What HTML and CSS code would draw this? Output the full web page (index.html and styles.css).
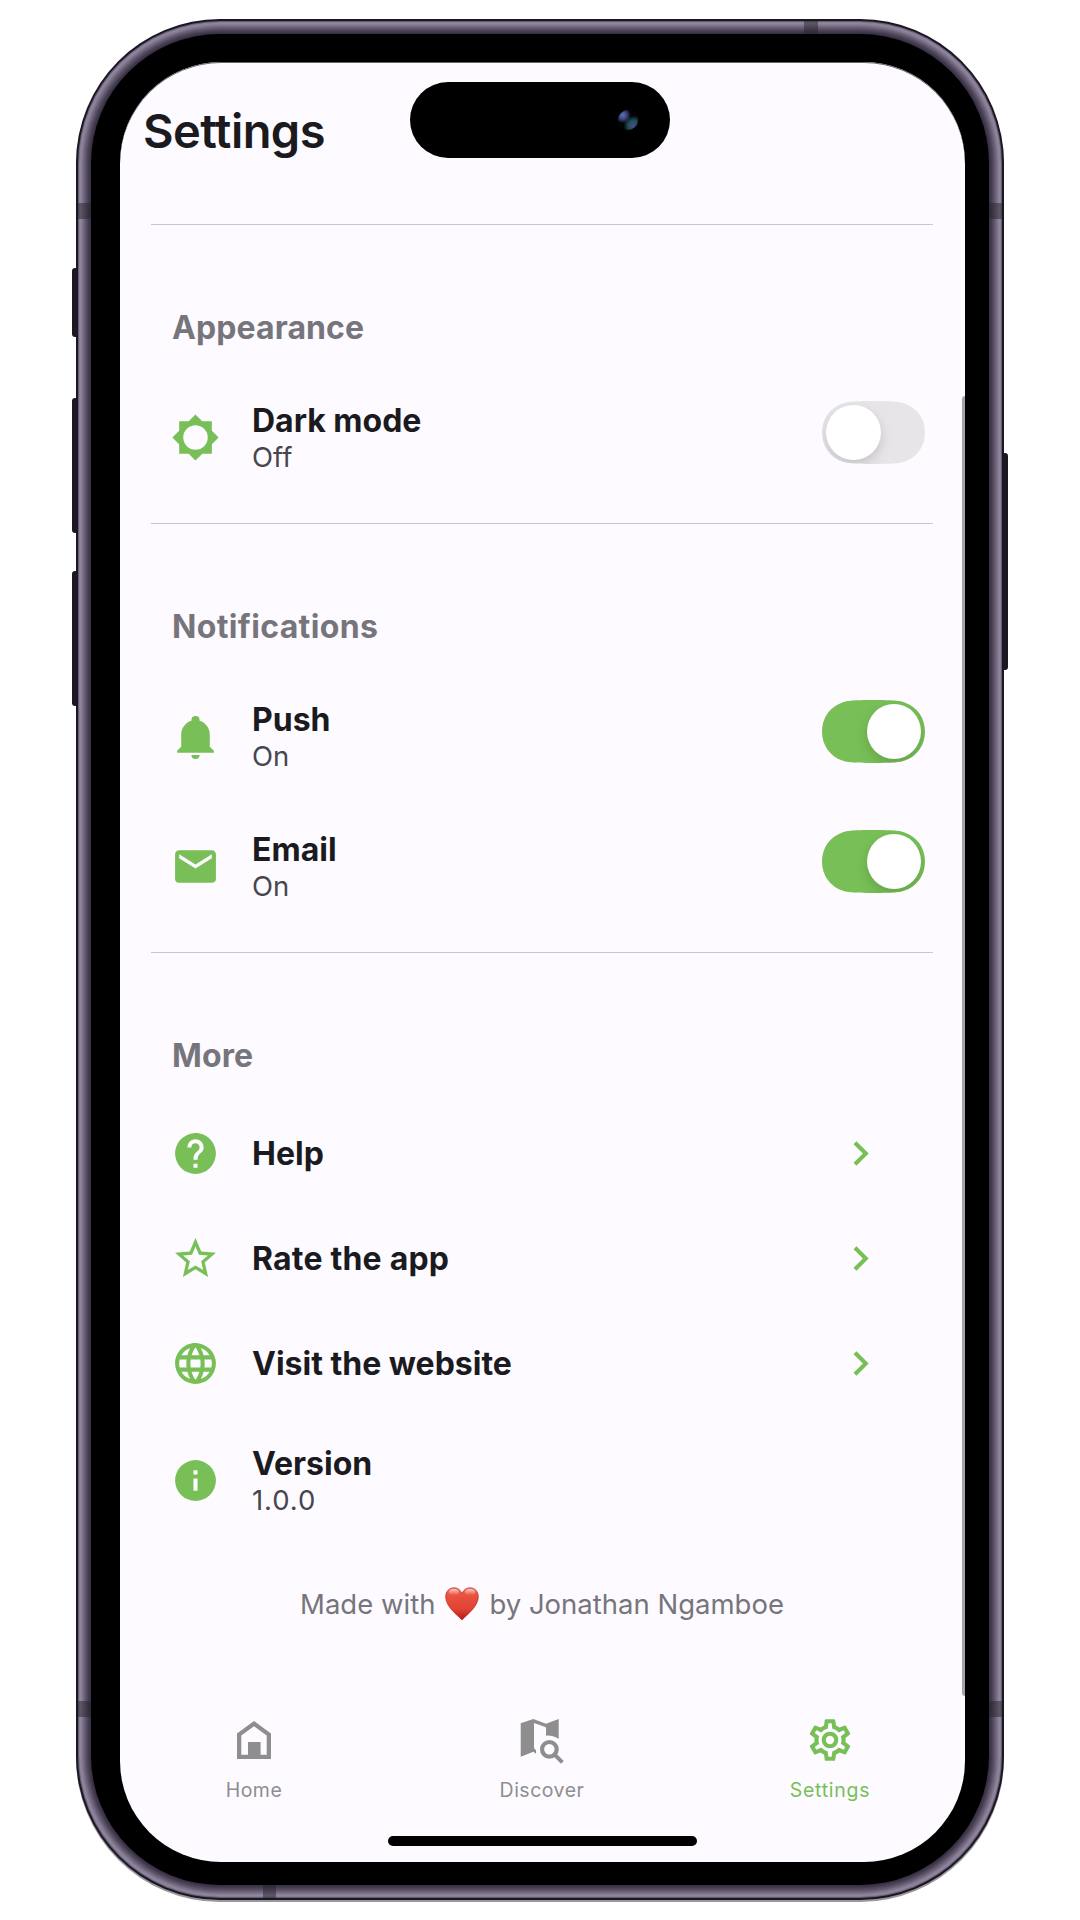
FILE: index.html
```html
<!DOCTYPE html>
<html lang="en">
<head>
<meta charset="utf-8">
<title>Settings</title>
<link rel="stylesheet" href="styles.css">
</head>
<body>
<div class="phone">
  <span class="side-button mute"></span>
  <span class="side-button volume-up"></span>
  <span class="side-button volume-down"></span>
  <span class="side-button power"></span>
  <span class="antenna left-top"></span>
  <span class="antenna left-bottom"></span>
  <span class="antenna right-top"></span>
  <span class="antenna right-bottom"></span>
  <span class="antenna top"></span>
  <span class="antenna bottom"></span>
  <div class="screen">
    <div class="island"><span class="camera"></span></div>
    <header class="header"><h1 class="page-title">Settings</h1></header>
    <main class="content">
      <section class="section">
        <h2 class="section-title">Appearance</h2>
        <div class="row">
          <svg class="icon" viewBox="0 0 24 24"><path d="M12,18A6,6 0 0,1 6,12A6,6 0 0,1 12,6A6,6 0 0,1 18,12A6,6 0 0,1 12,18M20,15.31L23.31,12L20,8.69V4H15.31L12,0.69L8.69,4H4V8.69L0.69,12L4,15.31V20H8.69L12,23.31L15.31,20H20V15.31Z"/></svg>
          <div class="label"><div class="name">Dark mode</div><div class="value">Off</div></div>
          <div class="switch"><span class="knob"></span></div>
        </div>
      </section>
      <section class="section">
        <h2 class="section-title wide">Notifications</h2>
        <div class="row">
          <svg class="icon" viewBox="0 0 24 24"><path d="M21,19V20H3V19L5,17V11C5,7.9 7.03,5.17 10,4.29C10,4.19 10,4.1 10,4A2,2 0 0,1 12,2A2,2 0 0,1 14,4C14,4.1 14,4.19 14,4.29C16.97,5.17 19,7.9 19,11V17L21,19M14,21A2,2 0 0,1 12,23A2,2 0 0,1 10,21"/></svg>
          <div class="label"><div class="name">Push</div><div class="value">On</div></div>
          <div class="switch on"><span class="knob"></span></div>
        </div>
        <div class="row">
          <svg class="icon" viewBox="0 0 24 24"><path d="M20,8L12,13L4,8V6L12,11L20,6M20,4H4C2.89,4 2,4.89 2,6V18A2,2 0 0,0 4,20H20A2,2 0 0,0 22,18V6C22,4.89 21.1,4 20,4Z"/></svg>
          <div class="label"><div class="name">Email</div><div class="value">On</div></div>
          <div class="switch on"><span class="knob"></span></div>
        </div>
      </section>
      <section class="section">
        <h2 class="section-title">More</h2>
        <div class="row link">
          <svg class="icon" viewBox="0 0 24 24"><path d="M15.07,11.25L14.17,12.17C13.45,12.89 13,13.5 13,15H11V14.5C11,13.39 11.45,12.39 12.17,11.67L13.41,10.41C13.78,10.05 14,9.55 14,9C14,7.89 13.1,7 12,7A2,2 0 0,0 10,9H8A4,4 0 0,1 12,5A4,4 0 0,1 16,9C16,9.88 15.64,10.67 15.07,11.25M13,19H11V17H13M12,2A10,10 0 0,0 2,12A10,10 0 0,0 12,22A10,10 0 0,0 22,12C22,6.47 17.5,2 12,2Z"/></svg>
          <div class="label"><div class="name">Help</div></div>
          <svg class="icon chevron" viewBox="0 0 24 24"><path d="M8.59,16.58L13.17,12L8.59,7.41L10,6L16,12L10,18L8.59,16.58Z"/></svg>
        </div>
        <div class="row link">
          <svg class="icon" viewBox="0 0 24 24"><path d="M12,15.39L8.24,17.66L9.23,13.38L5.91,10.5L10.29,10.13L12,6.09L13.71,10.13L18.09,10.5L14.77,13.38L15.76,17.66M22,9.24L14.81,8.63L12,2L9.19,8.63L2,9.24L7.45,13.97L5.82,21L12,17.27L18.18,21L16.54,13.97L22,9.24Z"/></svg>
          <div class="label"><div class="name loose">Rate the app</div></div>
          <svg class="icon chevron" viewBox="0 0 24 24"><path d="M8.59,16.58L13.17,12L8.59,7.41L10,6L16,12L10,18L8.59,16.58Z"/></svg>
        </div>
        <div class="row link">
          <svg class="icon" viewBox="0 0 24 24"><path d="M16.36,14C16.44,13.34 16.5,12.68 16.5,12C16.5,11.32 16.44,10.66 16.36,10H19.74C19.9,10.64 20,11.31 20,12C20,12.69 19.9,13.36 19.74,14M14.59,19.56C15.19,18.45 15.65,17.25 15.97,16H18.92C17.96,17.65 16.43,18.93 14.59,19.56M14.34,14H9.66C9.56,13.34 9.5,12.68 9.5,12C9.5,11.32 9.56,10.65 9.66,10H14.34C14.43,10.65 14.5,11.32 14.5,12C14.5,12.68 14.43,13.34 14.34,14M12,19.96C11.17,18.76 10.5,17.43 10.09,16H13.91C13.5,17.43 12.83,18.76 12,19.96M8,8H5.08C6.03,6.34 7.57,5.06 9.4,4.44C8.8,5.55 8.35,6.75 8,8M5.08,16H8C8.35,17.25 8.8,18.45 9.4,19.56C7.57,18.93 6.03,17.65 5.08,16M4.26,14C4.1,13.36 4,12.69 4,12C4,11.31 4.1,10.64 4.26,10H7.64C7.56,10.66 7.5,11.32 7.5,12C7.5,12.68 7.56,13.34 7.64,14M12,4.03C12.83,5.23 13.5,6.57 13.91,8H10.09C10.5,6.57 11.17,5.23 12,4.03M18.92,8H15.97C15.65,6.75 15.19,5.55 14.59,4.44C16.43,5.07 17.96,6.34 18.92,8M12,2C6.47,2 2,6.5 2,12A10,10 0 0,0 12,22A10,10 0 0,0 22,12A10,10 0 0,0 12,2Z"/></svg>
          <div class="label"><div class="name">Visit the website</div></div>
          <svg class="icon chevron" viewBox="0 0 24 24"><path d="M8.59,16.58L13.17,12L8.59,7.41L10,6L16,12L10,18L8.59,16.58Z"/></svg>
        </div>
        <div class="row">
          <svg class="icon" viewBox="0 0 24 24"><path d="M13,9H11V7H13M13,17H11V11H13M12,2A10,10 0 0,0 2,12A10,10 0 0,0 12,22A10,10 0 0,0 22,12A10,10 0 0,0 12,2Z"/></svg>
          <div class="label"><div class="name">Version</div><div class="value version">1.0.0</div></div>
        </div>
      </section>
      <p class="credit">
        <span>Made with</span>
        <svg class="heart" viewBox="0 0 34 34">
          <defs>
            <linearGradient id="heart-fill" x1="0" y1="0" x2="0" y2="1">
              <stop offset="0" stop-color="#ee6152"/><stop offset=".3" stop-color="#e84f3d"/><stop offset=".65" stop-color="#e04434"/><stop offset="1" stop-color="#b01a16"/>
            </linearGradient>
            <linearGradient id="heart-shine" x1="0" y1="0" x2="0" y2="1">
              <stop offset="0" stop-color="#fff" stop-opacity=".65"/><stop offset="1" stop-color="#fff" stop-opacity="0"/>
            </linearGradient>
          </defs>
          <path d="M17 33C13 28.500 .7 20 .7 9.700C.7 4.500 4.300 .8 8.900 .8C12.600 .8 15.500 3 17 6.500C18.500 3 21.400 .8 25.100 .8C29.700 .8 33.300 4.500 33.300 9.700C33.300 20 21 28.500 17 33Z" fill="url(#heart-fill)" stroke="#c5392c" stroke-width=".8"/>
          <ellipse cx="8.900" cy="5" rx="5.300" ry="3.200" fill="url(#heart-shine)"/>
          <ellipse cx="25.100" cy="5" rx="5.300" ry="3.200" fill="url(#heart-shine)"/>
        </svg>
        <span>by Jonathan Ngamboe</span>
      </p>
    </main>
    <nav class="tabs">
      <a class="tab">
        <svg class="tab-icon" viewBox="0 0 50 50"><path fill-rule="evenodd" d="M8 18.500L25 6L42 18.500V44H8ZM12.300 20.500V39.800H19V27H31.600V39.800H37.700V20.500L25 11.300Z"/></svg>
        <span class="tab-label">Home</span>
      </a>
      <a class="tab">
        <svg class="tab-icon" viewBox="0 0 50 50"><g transform="translate(3.700 4) scale(.3333)"><path d="M0 13L38 0L76 14L114 0V60C104 54 92 49 76 50V25L40 12V88L46 94V104L38 98L0 113Z"/><circle cx="86" cy="91" r="22" fill="none" stroke="currentColor" stroke-width="12.500"/><path d="M101 106L125 130" fill="none" stroke="currentColor" stroke-width="12"/></g></svg>
        <span class="tab-label">Discover</span>
      </a>
      <a class="tab active">
        <svg class="tab-icon" viewBox="0 0 24 24"><path d="M12,8A4,4 0 0,1 16,12A4,4 0 0,1 12,16A4,4 0 0,1 8,12A4,4 0 0,1 12,8M12,10A2,2 0 0,0 10,12A2,2 0 0,0 12,14A2,2 0 0,0 14,12A2,2 0 0,0 12,10M10,22C9.75,22 9.54,21.82 9.5,21.58L9.13,18.93C8.5,18.68 7.96,18.34 7.44,17.94L4.95,18.95C4.73,19.03 4.46,18.95 4.34,18.73L2.34,15.27C2.21,15.05 2.27,14.78 2.46,14.63L4.57,12.97L4.5,12L4.57,11L2.46,9.37C2.27,9.22 2.21,8.95 2.34,8.73L4.34,5.27C4.46,5.05 4.73,4.96 4.95,5.05L7.44,6.05C7.96,5.66 8.5,5.32 9.13,5.07L9.5,2.42C9.54,2.18 9.75,2 10,2H14C14.25,2 14.46,2.18 14.5,2.42L14.87,5.07C15.5,5.32 16.04,5.66 16.56,6.05L19.05,5.05C19.27,4.96 19.54,5.05 19.66,5.27L21.66,8.73C21.79,8.95 21.73,9.22 21.54,9.37L19.43,11L19.5,12L19.43,13L21.54,14.63C21.73,14.78 21.79,15.05 21.66,15.27L19.66,18.73C19.54,18.95 19.27,19.04 19.05,18.95L16.56,17.95C16.04,18.34 15.5,18.68 14.87,18.93L14.5,21.58C14.46,21.82 14.25,22 14,22H10M11.25,4L10.88,6.61C9.68,6.86 8.62,7.5 7.85,8.39L5.44,7.35L4.69,8.65L6.8,10.2C6.4,11.37 6.4,12.64 6.8,13.8L4.68,15.36L5.43,16.66L7.86,15.62C8.63,16.5 9.68,17.14 10.87,17.38L11.24,20H12.76L13.13,17.39C14.32,17.14 15.37,16.5 16.14,15.62L18.57,16.66L19.32,15.36L17.2,13.81C17.6,12.64 17.6,11.37 17.2,10.2L19.31,8.65L18.56,7.35L16.15,8.39C15.38,7.5 14.32,6.86 13.12,6.62L12.75,4H11.25Z"/></svg>
        <span class="tab-label">Settings</span>
      </a>
    </nav>
    <div class="home-indicator"></div>
    <span class="scrollbar"></span>
  </div>
</div>
</body>
</html>
```
FILE: styles.css
```css
* { box-sizing: border-box; }

body {
  margin: 0;
  height: 1920px;
  overflow: hidden;
  background: #fff;
  font-family: Inter, "Liberation Sans", sans-serif;
}

h1, h2, p { margin: 0; }

/* Device: black bezel, with the metal rim built from rings around it */
.phone {
  position: relative;
  width: 898px;
  height: 1851px;
  margin: 34px 0 0 91px;
  padding: 28px 24px 23px 29px;
  border-radius: 129px;
  background: #000;
  box-shadow:
    0 0 0 1px #3a3145,
    0 0 0 2px #3f364b,
    0 0 0 3px #453d51,
    0 0 0 4px #4d4559,
    0 0 0 5px #564e62,
    0 0 0 6px #60576c,
    0 0 0 7px #6a6177,
    0 0 0 8px #746b82,
    0 0 0 9px #7e758c,
    0 0 0 10px #887e96,
    0 0 0 11px #90869e,
    0 0 0 12px #897f97,
    0 0 0 13px #665d73,
    0 0 0 15px #1a1622,
    0 2px 0 15px #99979b;
}

.side-button {
  position: absolute;
  left: -19px;
  width: 6px;
  background: #1c1823;
  border-radius: 3px 0 0 3px;
}
.mute { top: 234px; height: 69px; }
.volume-up { top: 364px; height: 135px; }
.volume-down { top: 537px; height: 135px; }
.power { top: 419px; left: 911px; height: 217px; border-radius: 0 3px 3px 0; }

.antenna { position: absolute; background: rgba(40, 36, 44, .5); }
.left-top, .left-bottom { left: -13px; width: 13px; height: 16px; }
.right-top, .right-bottom { right: -13px; width: 13px; height: 16px; }
.left-top, .right-top { top: 169px; }
.left-bottom, .right-bottom { top: 1667px; }
.top { top: -13px; left: 713px; width: 14px; height: 13px; }
.bottom { bottom: -13px; left: 172px; width: 13px; height: 13px; }

.screen {
  position: relative;
  display: flex;
  flex-direction: column;
  height: 1800px;
  overflow: hidden;
  border-radius: 101px;
  background: #fdfbff;
  box-shadow: inset 0 1px 0 #66646a;
}

.island {
  position: absolute;
  top: 20px;
  left: 290px;
  width: 260px;
  height: 76px;
  border-radius: 38px;
  background: #000;
}
.camera {
  position: absolute;
  top: 28px;
  right: 32px;
  width: 20px;
  height: 20px;
  border-radius: 50%;
  background:
    radial-gradient(circle at 24% 26%, #5f6fb4 0, #3d4987 18%, transparent 38%),
    radial-gradient(circle at 78% 78%, #4c4a8c 0, #1f5058 24%, transparent 46%),
    #030304;
  box-shadow: 0 0 2px #111;
}

.header { padding: 39px 0 0 23px; height: 162px; }
.page-title {
  font-size: 47px;
  font-weight: 600;
  line-height: 60px;
  letter-spacing: -.55px;
  color: #1b1b1f;
}

.content { padding: 0 32px 0 31px; flex: 1; }
.section {
  border-top: 1px solid #c9c6cf;
  padding: 83px 8px 20px 20px;
}
.section:nth-child(3) { padding-bottom: 0; }
.section-title {
  font-size: 32px;
  font-weight: 650;
  line-height: 40px;
  letter-spacing: .1px;
  color: #77757c;
  margin: 0 0 25px 1px;
}
.section-title.wide { letter-spacing: .35px; }

.row { display: flex; align-items: center; height: 130px; }
.row.link { height: 105px; }
.icon { flex: none; width: 49px; height: 49px; fill: #78bf57; margin-bottom: 2px; }
.row.link .icon { margin-bottom: 0; }
.label { flex: 1; padding-left: 32px; }
.name {
  font-size: 32px;
  font-weight: 650;
  line-height: 36px;
  letter-spacing: 0;
  color: #1b1b1f;
}
.name.loose { letter-spacing: .2px; }
.value {
  font-size: 27.500px;
  line-height: 34px;
  margin-top: 1px;
  color: #47464f;
}
.value.version { letter-spacing: .9px; }
.chevron { margin-right: 40px; }

.switch {
  position: relative;
  width: 103px;
  height: 63px;
  margin-top: -11px;
  background: #e7e5e8;
  clip-path: path("M51.500 0C72 0 78 .8 82 2.200C95 6.500 103 17.500 103 31.500C103 45.500 95 56.500 82 60.800C78 62.200 72 63 51.500 63C31 63 25 62.200 21 60.800C8 56.500 0 45.500 0 31.500C0 17.500 8 6.500 21 2.200C25 .8 31 0 51.500 0Z");
}
.switch.on { background: #78bf57; }
.knob {
  position: absolute;
  top: 4px;
  left: 4px;
  width: 55px;
  height: 55px;
  border-radius: 50%;
  background: #fff;
  box-shadow: 0 5px 12px rgba(0, 0, 0, .15);
}
.switch.on .knob { left: 45px; width: 54px; }

.credit {
  display: flex;
  justify-content: center;
  gap: 10px;
  margin-top: 38px;
  font-size: 27.500px;
  line-height: 40px;
  letter-spacing: 0;
  color: #77757c;
}
.heart { width: 34px; height: 34px; margin-top: 3px; }

.tabs { display: flex; justify-content: center; height: 121px; margin-left: -1px; }
.tab {
  flex: none;
  display: flex;
  flex-direction: column;
  align-items: center;
  gap: 13px;
  width: 288px;
  color: #8e8e8f;
}
.tab-icon { width: 50px; height: 50px; fill: currentColor; }
.tab-label { font-size: 19.500px; line-height: 24px; letter-spacing: .5px; }
.tab.active { color: #78bf57; }
.tab.active .tab-label { letter-spacing: .75px; }

.home-indicator {
  align-self: center;
  width: 309px;
  height: 10px;
  margin: 0 1px 16px 0;
  border-radius: 5px;
  background: #000;
}

.scrollbar {
  position: absolute;
  top: 334px;
  right: 0;
  width: 3px;
  height: 1300px;
  border-radius: 3px 0 0 3px;
  background: #a5a4a8;
}
```
